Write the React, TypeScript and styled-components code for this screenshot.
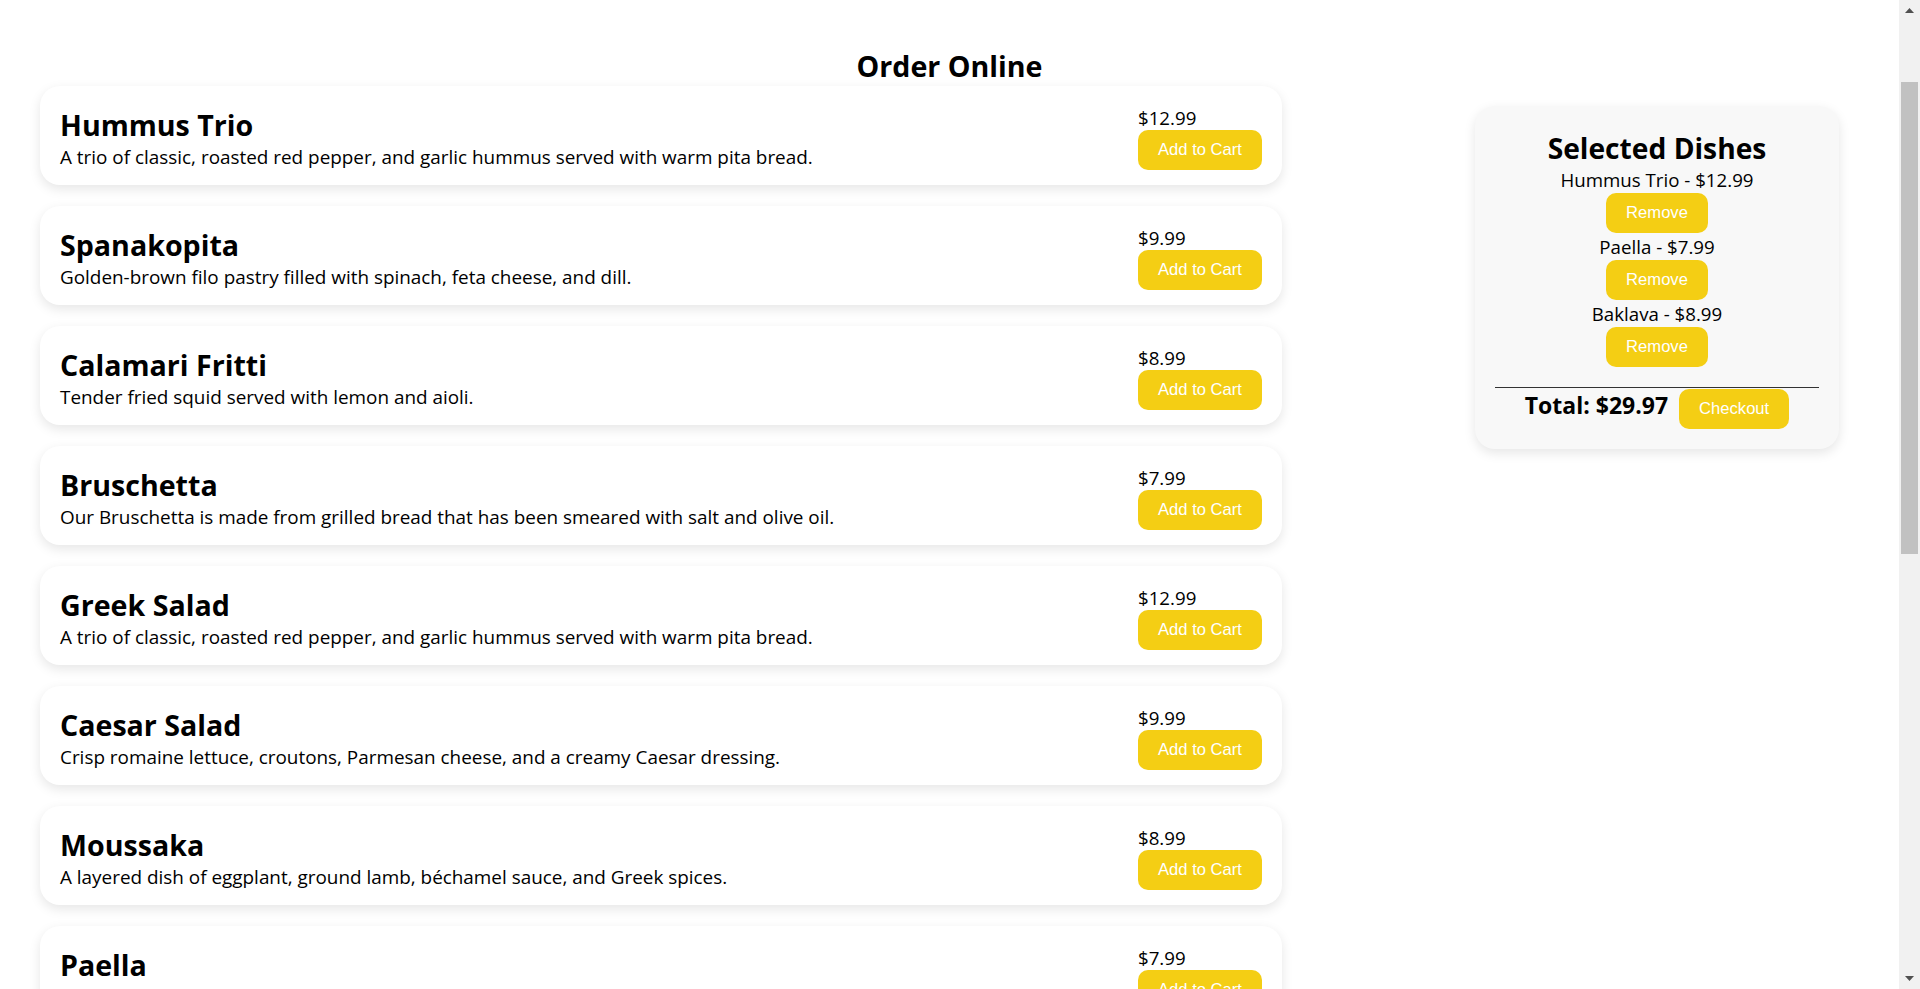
import React, { useState } from "react";
import styled, { createGlobalStyle } from "styled-components";

const GlobalStyle = createGlobalStyle`
  html, body {
    margin: 0;
    padding: 0;
    background: #ffffff;
  }
  body {
    font-family: "Open Sans", "Noto Sans", sans-serif;
    color: #000000;
  }
  *, *::before, *::after {
    box-sizing: border-box;
  }
`;

type Dish = { name: string; price: number; description: string };

const DISHES: Dish[] = [
  { name: "Hummus Trio", price: 12.99, description: "A trio of classic, roasted red pepper, and garlic hummus served with warm pita bread." },
  { name: "Spanakopita", price: 9.99, description: "Golden-brown filo pastry filled with spinach, feta cheese, and dill." },
  { name: "Calamari Fritti", price: 8.99, description: "Tender fried squid served with lemon and aioli." },
  { name: "Bruschetta", price: 7.99, description: "Our Bruschetta is made from grilled bread that has been smeared with salt and olive oil." },
  { name: "Greek Salad", price: 12.99, description: "A trio of classic, roasted red pepper, and garlic hummus served with warm pita bread." },
  { name: "Caesar Salad", price: 9.99, description: "Crisp romaine lettuce, croutons, Parmesan cheese, and a creamy Caesar dressing." },
  { name: "Moussaka", price: 8.99, description: "A layered dish of eggplant, ground lamb, béchamel sauce, and Greek spices." },
  { name: "Paella", price: 7.99, description: "Saffron rice cooked with seafood, chicken, chorizo, and vegetables." },
  { name: "Falafel Platter", price: 12.99, description: "Crispy chickpea fritters served with tahini sauce and pickled vegetables." },
  { name: "Lemon Chicken", price: 9.99, description: "Grilled chicken marinated in lemon, garlic, and oregano with roasted potatoes." },
  { name: "Baklava", price: 8.99, description: "Layers of filo pastry filled with chopped nuts and sweetened with honey." },
  { name: "Tzatziki", price: 7.99, description: "Cool yogurt dip with cucumber, garlic, and fresh dill." },
  { name: "Lamb Souvlaki", price: 12.99, description: "Skewered lamb grilled over open flame, served with pita and tzatziki." },
  { name: "Tiramisu", price: 9.99, description: "Espresso-soaked ladyfingers layered with mascarpone cream." },
];

const Page = styled.main`
  margin-right: 21px;
  padding: 48px 0 24px;
`;

const PageTitle = styled.h1`
  margin: 0 0 2px;
  font-size: 28.6px;
  line-height: 36px;
  font-weight: 700;
  text-align: center;
`;

const Layout = styled.div`
  display: grid;
  grid-template-columns: 1242px 364px;
  justify-content: space-between;
  align-items: start;
  padding: 0 60px 0 40px;
`;

const MenuList = styled.section`
  display: flex;
  flex-direction: column;
  gap: 21px;
`;

const DishCard = styled.article`
  height: 99px;
  padding: 18px 20px 0;
  display: flex;
  justify-content: space-between;
  align-items: flex-start;
  background: #ffffff;
  border-radius: 20px;
  box-shadow: 0 4px 12px rgba(0, 0, 0, 0.1);
`;

const DishInfo = styled.div`
  display: flex;
  flex-direction: column;
`;

const DishName = styled.h3`
  margin: 0;
  font-size: 28.6px;
  line-height: 41px;
  font-weight: 700;
`;

const DishDescription = styled.p`
  margin: 0;
  font-size: 18.9px;
  line-height: 25px;
`;

const PriceColumn = styled.div`
  width: 124px;
  margin-top: 1px;
  display: flex;
  flex-direction: column;
  align-items: flex-start;
`;

const Price = styled.span`
  font-size: 18.7px;
  line-height: 25px;
`;

const YellowButton = styled.button<{ $offset?: number }>`
  height: 40px;
  margin-top: ${(p) => p.$offset ?? 0}px;
  padding: 0 20px;
  border: none;
  border-radius: 10px;
  background: #f4ce14;
  color: #ffffff;
  font-family: "Liberation Sans", Arial, sans-serif;
  font-size: 16.6px;
  cursor: pointer;
  white-space: nowrap;
`;

const CartPanel = styled.aside`
  margin-top: 20px;
  padding: 22px 20px 20px;
  background: #f8f8f8;
  border-radius: 20px;
  box-shadow: 0 4px 12px rgba(0, 0, 0, 0.1);
  text-align: center;
`;

const CartTitle = styled.h2`
  margin: 0;
  font-size: 28.2px;
  line-height: 40px;
  font-weight: 700;
`;

const CartList = styled.ul`
  list-style: none;
  margin: 0;
  padding: 0;
  display: flex;
  flex-direction: column;
  align-items: center;
  gap: 2px;
`;

const CartItem = styled.li`
  display: flex;
  flex-direction: column;
  align-items: center;
`;

const CartItemLabel = styled.span`
  font-size: 18.7px;
  line-height: 24px;
`;

const Divider = styled.hr`
  margin: 20px 0 1px;
  height: 0;
  border: 0;
  border-top: 1px solid #333333;
`;

const TotalRow = styled.div`
  display: flex;
  justify-content: center;
  align-items: baseline;
  gap: 11px;
`;

const TotalText = styled.h3`
  margin: 0;
  font-size: 23px;
  line-height: 31px;
  font-weight: 700;
`;

/* Window scrollbar as it appears in the screenshot (drawn, lies over the page edge) */
const ScrollbarTrack = styled.div`
  position: fixed;
  top: 0;
  right: 0;
  width: 21px;
  height: 100vh;
  background: #f1f1f1;
  display: flex;
  flex-direction: column;
`;

const ScrollArrow = styled.div`
  height: 21px;
  flex: none;
  display: flex;
  align-items: center;
  justify-content: center;
`;

const ScrollThumbArea = styled.div`
  flex: 1;
  padding: 61px 2px 0;
`;

const ScrollThumb = styled.div`
  height: 472px;
  background: #c1c1c1;
`;

const fmt = (n: number) => `$${n.toFixed(2)}`;

function Scrollbar() {
  return (
    <ScrollbarTrack aria-hidden="true">
      <ScrollArrow>
        <svg width="9" height="5" viewBox="0 0 9 5">
          <path d="M0 5 L4.5 0 L9 5 Z" fill="#505050" />
        </svg>
      </ScrollArrow>
      <ScrollThumbArea>
        <ScrollThumb />
      </ScrollThumbArea>
      <ScrollArrow>
        <svg width="9" height="5" viewBox="0 0 9 5">
          <path d="M0 0 L9 0 L4.5 5 Z" fill="#505050" />
        </svg>
      </ScrollArrow>
    </ScrollbarTrack>
  );
}

export default function App() {
  const [cart, setCart] = useState<Dish[]>(() =>
    ["Hummus Trio", "Paella", "Baklava"].map((n) => DISHES.find((d) => d.name === n)!)
  );

  const total = cart.reduce((s, d) => s + d.price, 0);

  return (
    <>
      <GlobalStyle />
      <Page>
        <PageTitle>Order Online</PageTitle>
        <Layout>
          <MenuList>
            {DISHES.map((dish) => (
              <DishCard key={dish.name}>
                <DishInfo>
                  <DishName>{dish.name}</DishName>
                  <DishDescription>{dish.description}</DishDescription>
                </DishInfo>
                <PriceColumn>
                  <Price>{fmt(dish.price)}</Price>
                  <YellowButton onClick={() => setCart((c) => [...c, dish])}>Add to Cart</YellowButton>
                </PriceColumn>
              </DishCard>
            ))}
          </MenuList>
          <CartPanel>
            <CartTitle>Selected Dishes</CartTitle>
            <CartList>
              {cart.map((dish, i) => (
                <CartItem key={`${dish.name}-${i}`}>
                  <CartItemLabel>
                    {dish.name} - {fmt(dish.price)}
                  </CartItemLabel>
                  <YellowButton $offset={1} onClick={() => setCart((c) => c.filter((_, j) => j !== i))}>
                    Remove
                  </YellowButton>
                </CartItem>
              ))}
            </CartList>
            <Divider />
            <TotalRow>
              <TotalText>Total: {fmt(total)}</TotalText>
              <YellowButton>Checkout</YellowButton>
            </TotalRow>
          </CartPanel>
        </Layout>
      </Page>
      <Scrollbar />
    </>
  );
}
